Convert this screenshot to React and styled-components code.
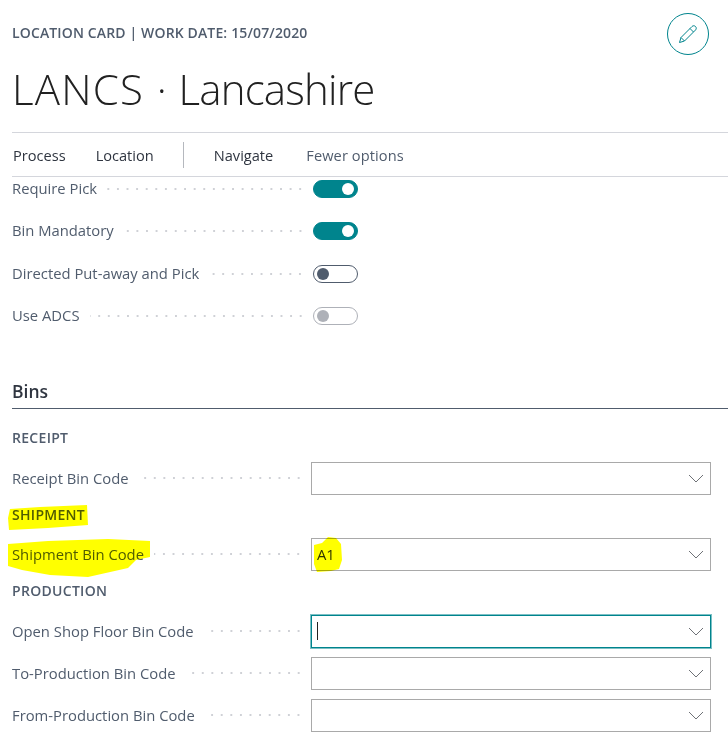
import React from "react";
import styled, { createGlobalStyle } from "styled-components";

const GlobalStyle = createGlobalStyle`
  html, body {
    margin: 0;
    padding: 0;
    background: #fff;
    height: 751px;
    overflow: hidden;
  }
  body {
    font-family: "Open Sans", "Noto Sans", "Liberation Sans", sans-serif;
  }
`;

const Page = styled.div`
  position: relative;
  width: 728px;
  height: 751px;
  padding-left: 12px;
  box-sizing: border-box;
  overflow: hidden;
`;

const Header = styled.div`
  height: 132px;
  position: relative;
  box-sizing: border-box;
  padding-top: 24px;
`;

const Caption = styled.div`
  font-size: 14px;
  line-height: 18px;
  font-weight: 600;
  letter-spacing: 0.14px;
  color: #505c6d;
`;

const Title = styled.h1`
  margin: 18px 0 0;
  font-size: 42px;
  line-height: 58px;
  font-weight: 300;
  color: #212121;
  letter-spacing: -0.8px;
  word-spacing: 2.5px;
`;

const Code = styled.span`
  letter-spacing: 1.2px;
`;

const EditButton = styled.button`
  position: absolute;
  top: 13px;
  right: 19px;
  width: 42px;
  height: 42px;
  padding: 0;
  border-radius: 50%;
  border: 1px solid #00848d;
  background: #fff;
  color: #00848d;
  display: flex;
  align-items: center;
  justify-content: center;
`;

const PencilIcon = styled.svg`
  width: 20px;
  height: 20px;
  fill: none;
  stroke: currentColor;
  stroke-width: 1;
`;

const ActionBar = styled.div`
  height: 45px;
  box-sizing: border-box;
  border-top: 1px solid #d4d6dc;
  border-bottom: 1px solid #d4d6dc;
  display: flex;
  align-items: center;
  font-size: 14.6px;
  color: #2f3540;
`;

const Action = styled.span`
  margin-left: ${(props) => props.$left || 0}px;
  color: ${(props) => (props.$muted ? "#505c6d" : "#2f3540")};
  letter-spacing: ${(props) => (props.$muted ? "0.1px" : "0")};
`;

const Divider = styled.span`
  width: 1px;
  height: 26px;
  margin-left: 29px;
  background: #b5b8be;
`;

const ToggleList = styled.div`
  display: flex;
  flex-direction: column;
  gap: 20.33px;
  padding-top: 1px;
`;

const Row = styled.div`
  display: flex;
  align-items: center;
  width: ${(props) => (props.$field ? "699px" : "346px")};
  height: ${(props) => (props.$field ? "33px" : "22px")};
  font-size: 14.8px;
  color: #505c6d;
`;

const Label = styled.span`
  white-space: nowrap;
  margin-right: 10px;
  padding-bottom: ${(props) => (props.$raised ? "2px" : "0")};
`;

const Dots = styled.span`
  flex: 1;
  height: 2px;
  margin-right: 8px;
  background-image: radial-gradient(circle, #cfd1d6 1px, transparent 1.2px);
  background-size: 9.6px 2px;
  background-repeat: repeat-x;
  background-position: right center;
  min-width: 0;
`;

const Toggle = styled.span`
  flex: none;
  width: 45px;
  height: 18px;
  box-sizing: border-box;
  border-radius: 9px;
  display: flex;
  align-items: center;
  padding: 0 3px;
  justify-content: ${(props) => (props.$on ? "flex-end" : "flex-start")};
  background: ${(props) => (props.$on ? "#00848d" : "#fff")};
  border: 1px solid
    ${(props) =>
      props.$on ? "#00848d" : props.$disabled ? "#aeb1b8" : "#505c6d"};
`;

const Knob = styled.span`
  width: 12px;
  height: 12px;
  border-radius: 50%;
  background: ${(props) =>
    props.$on ? "#fff" : props.$disabled ? "#aeb1b8" : "#505c6d"};
`;

const SectionTitle = styled.h2`
  margin: 52px 0 0;
  height: 30px;
  box-sizing: border-box;
  border-bottom: 1px solid #505c6d;
  font-size: 17.5px;
  line-height: 24px;
  font-weight: 600;
  color: #2f3540;
`;

const Group = styled.div`
  font-size: 14px;
  line-height: 18px;
  font-weight: 600;
  letter-spacing: 0.3px;
  height: 18px;
  color: #505c6d;
  margin-top: ${(props) => props.$top}px;
  margin-bottom: ${(props) => props.$bottom}px;
`;

const FieldStack = styled.div`
  display: flex;
  flex-direction: column;
  gap: 9px;
`;

const Select = styled.div`
  flex: none;
  width: 400px;
  height: 33px;
  box-sizing: border-box;
  display: flex;
  align-items: center;
  justify-content: space-between;
  padding: 0 6px 0 5px;
  background: #fff;
  color: #2f3540;
  border: 1px solid ${(props) => (props.$focus ? "#00848d" : "#a9a9a9")};
  box-shadow: ${(props) => (props.$focus ? "0 0 0 1px #7cc0c5" : "none")};
`;

const Caret = styled.span`
  width: 1px;
  height: 18px;
  background: #212121;
`;

const Value = styled.span`
  position: relative;
`;

const Chevron = styled.svg`
  width: 16px;
  height: 9px;
  margin-left: auto;
  fill: none;
  stroke: #6f7277;
  stroke-width: 1;
`;

const Marker = styled.svg`
  position: absolute;
  inset: 0;
  width: 728px;
  height: 751px;
  pointer-events: none;
  mix-blend-mode: multiply;
  fill: #ffff00;
`;

const toggles = [
  { label: "Require Pick", on: true },
  { label: "Bin Mandatory", on: true },
  { label: "Directed Put-away and Pick", on: false },
  { label: "Use ADCS", on: false, disabled: true },
];

function Field({ label, value, focus }) {
  return (
    <Row $field>
      <Label>{label}</Label>
      <Dots />
      <Select $focus={focus}>
        {focus && <Caret />}
        {value && <Value>{value}</Value>}
        <Chevron viewBox="0 0 16 9">
          <path d="M1 1l7 7 7-7" />
        </Chevron>
      </Select>
    </Row>
  );
}

function App() {
  return (
    <Page>
      <GlobalStyle />
      <Header>
        <Caption>LOCATION CARD | WORK DATE: 15/07/2020</Caption>
        <Title>
          <Code>LANCS</Code> · Lancashire
        </Title>
        <EditButton>
          <PencilIcon viewBox="0 0 20 20">
            <path d="M1.5 18.5L3 13.5 14 2.5c1-1 2.5-1 3.5 0s1 2.5 0 3.5L6.5 17z" />
            <path d="M3 13.5L6.5 17M12 4.5L15.5 8" />
          </PencilIcon>
        </EditButton>
      </Header>
      <ActionBar>
        <Action $left={1}>Process</Action>
        <Action $left={30}>Location</Action>
        <Divider />
        <Action $left={30}>Navigate</Action>
        <Action $left={33} $muted>
          Fewer options
        </Action>
      </ActionBar>
      <ToggleList>
        {toggles.map((item) => (
          <Row key={item.label}>
            <Label $raised>{item.label}</Label>
            <Dots />
            <Toggle $on={item.on} $disabled={item.disabled}>
              <Knob $on={item.on} $disabled={item.disabled} />
            </Toggle>
          </Row>
        ))}
      </ToggleList>
      <SectionTitle>Bins</SectionTitle>
      <Group $top={20} $bottom={15}>
        RECEIPT
      </Group>
      <Field label="Receipt Bin Code" />
      <Group $top={11} $bottom={14}>
        SHIPMENT
      </Group>
      <Field label="Shipment Bin Code" value="A1" />
      <Group $top={11} $bottom={15}>
        PRODUCTION
      </Group>
      <FieldStack>
        <Field label="Open Shop Floor Bin Code" focus />
        <Field label="To-Production Bin Code" />
        <Field label="From-Production Bin Code" />
      </FieldStack>
      <Marker viewBox="0 0 728 751">
        <path d="M10 509l30-2 47-2 1 20-40 3-39 2-1-12z" />
        <path d="M8 544L48 541 108 539 150 541 150 557 136 560 128 568 88 577 50 575 22 570 8 566z" />
        <path d="M314 545l8-2 6-6 8 1 5 6 1 16-3 9-8 2-14 1-3-8z" />
      </Marker>
    </Page>
  );
}

export default App;
